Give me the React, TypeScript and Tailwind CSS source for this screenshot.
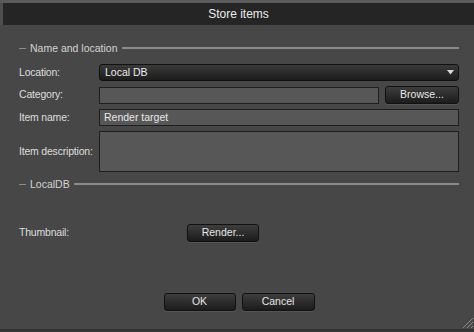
const font = { fontFamily: '"Liberation Sans", Arial, sans-serif' }

function GroupTitle({ title }: { title: string }) {
  return (
    <div className="flex items-center gap-[4px] text-[10.5px] text-[#d4d4d4] leading-[12px]">
      <span className="w-[7px] h-px bg-[#8c8c8c]" />
      <span>{title}</span>
      <span className="flex-1 h-[2px] bg-[#8a8a8a]" />
    </div>
  )
}

function Button({ label, className = '' }: { label: string; className?: string }) {
  return (
    <div
      className={`flex items-center justify-center h-[18px] rounded-[3px] border border-[#111] bg-gradient-to-b from-[#3e3e3e] to-[#1c1c1c] text-[10.5px] text-[#e6e6e6] shadow-[0_1px_0_#555] ${className}`}
    >
      {label}
    </div>
  )
}

function Field({ className = '', children }: { className?: string; children?: React.ReactNode }) {
  return (
    <div className={`border border-[#1e1e1e] bg-[#575757] text-[10.5px] text-[#e8e8e8] pl-[4px] flex items-center ${className}`}>
      {children}
    </div>
  )
}

function Row({ label, children, className = '' }: { label: string; children: React.ReactNode; className?: string }) {
  return (
    <div className={`flex items-center ${className}`}>
      <div className="w-[80px] shrink-0 whitespace-nowrap text-[10.5px] tracking-[-0.2px] text-[#dedede]">{label}</div>
      {children}
    </div>
  )
}

export default function App() {
  return (
    <div className="w-[474px] h-[332px] flex flex-col bg-[#474747] overflow-hidden" style={font}>
      <div className="h-[3px] bg-[#5a5a5a]" />
      <div className="flex">
        <div className="w-[3px] bg-[#4e4e4e]" />
        <div className="flex-1 h-[22px] bg-[#252525] flex items-center justify-center text-[12px] text-[#ececec]">
          Store items
        </div>
      </div>
      <div className="flex-1 flex flex-col pl-[19px] pr-[15px] pt-[17px]">
        <GroupTitle title="Name and location" />
        <div className="flex flex-col gap-[5px] mt-[10px]">
          <Row label="Location:">
            <div className="flex-1 h-[17px] rounded-[3px] border border-[#111] bg-gradient-to-b from-[#3a3a3a] to-[#1d1d1d] flex items-center justify-between pl-[5px] pr-[4px] text-[10.5px] text-[#ececec]">
              <span>Local DB</span>
              <svg width="7" height="5" viewBox="0 0 7 5">
                <path d="M0 0 L7 0 L3.5 4.5 Z" fill="#d8d8d8" />
              </svg>
            </div>
          </Row>
          <Row label="Category:">
            <Field className="w-[280px] h-[17px]" />
            <Button label="Browse..." className="ml-[6px] flex-1 h-[17px]" />
          </Row>
          <Row label="Item name:">
            <Field className="flex-1 h-[17px]">Render target</Field>
          </Row>
          <Row label="Item description:">
            <Field className="flex-1 h-[41px]" />
          </Row>
        </div>
        <div className="mt-[6px]">
          <GroupTitle title="LocalDB" />
        </div>
        <Row label="Thumbnail:" className="mt-[34px]">
          <div className="w-[88px]" />
          <Button label="Render..." className="w-[72px]" />
        </Row>
        <div className="flex-1" />
        <div className="flex justify-center gap-[6px] mb-[18px]">
          <Button label="OK" className="w-[72px]" />
          <Button label="Cancel" className="w-[73px]" />
        </div>
      </div>
      <div className="relative h-[3px] bg-[#333]">
        <svg className="absolute right-0 bottom-[3px]" width="14" height="14" viewBox="0 0 14 14">
          <path d="M13 3 L3 13 M13 7 L7 13 M13 11 L11 13" stroke="#8a8a8a" strokeWidth="1" />
        </svg>
      </div>
    </div>
  )
}
